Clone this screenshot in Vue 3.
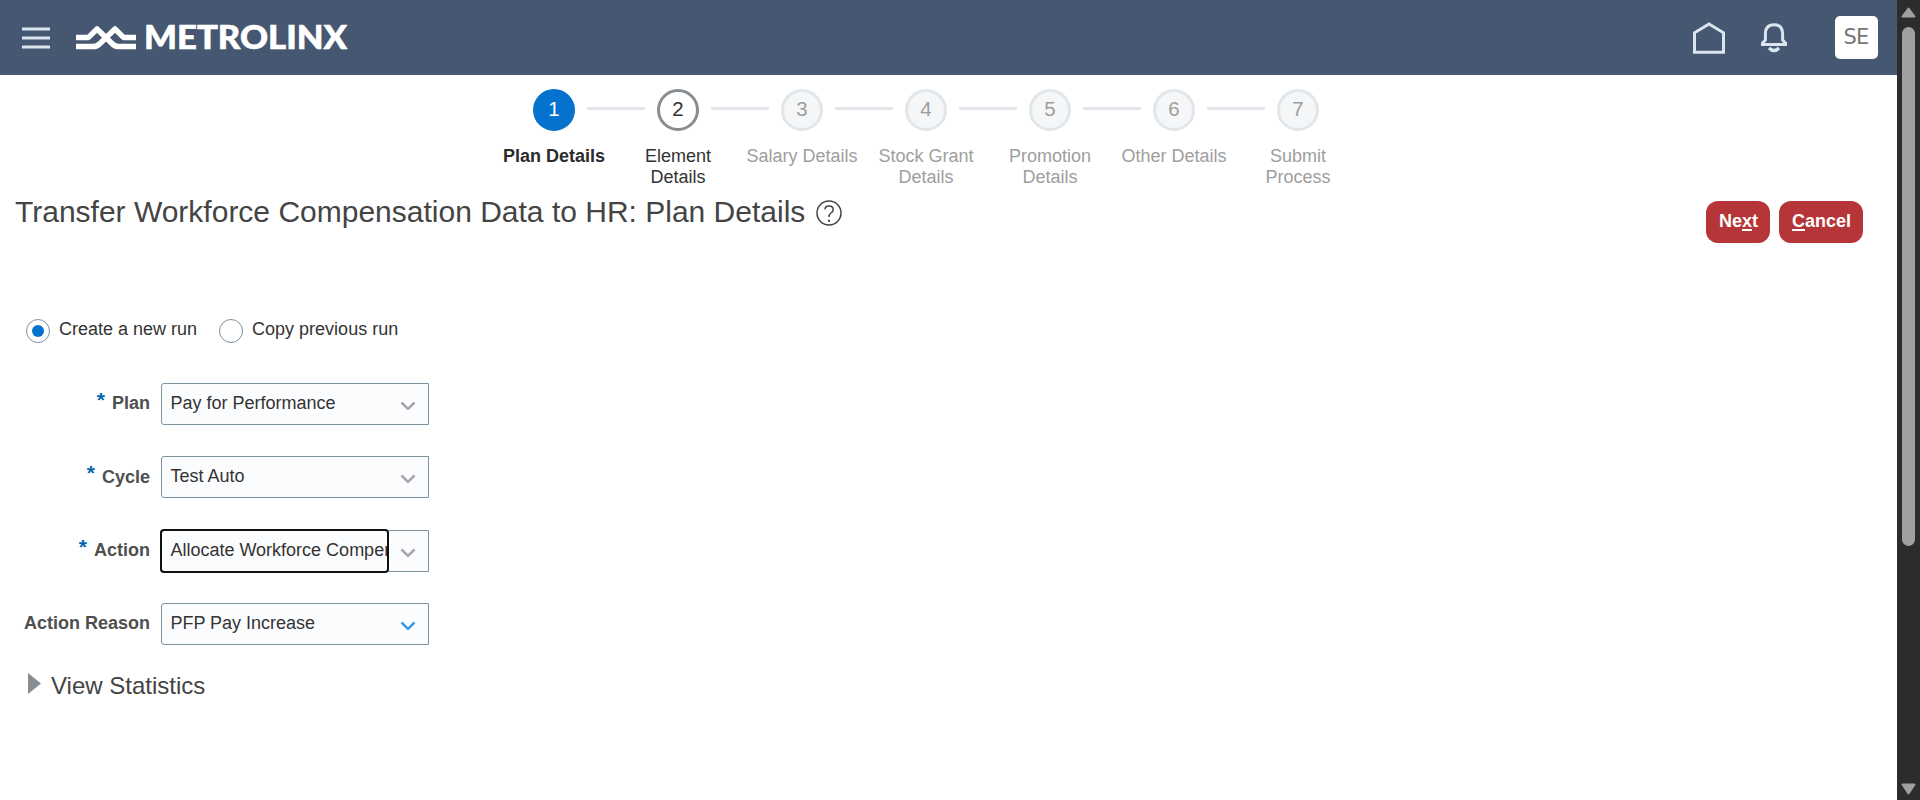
<script setup>
import { ref } from 'vue'

const steps = [
  { n: 1, label: 'Plan Details', state: 'current' },
  { n: 2, label: 'Element Details', state: 'next' },
  { n: 3, label: 'Salary Details', state: 'off' },
  { n: 4, label: 'Stock Grant Details', state: 'off' },
  { n: 5, label: 'Promotion Details', state: 'off' },
  { n: 6, label: 'Other Details', state: 'off' },
  { n: 7, label: 'Submit Process', state: 'off' },
]

const fields = [
  { label: 'Plan', value: 'Pay for Performance', required: true },
  { label: 'Cycle', value: 'Test Auto', required: true },
  { label: 'Action', value: 'Allocate Workforce Compen', required: true, focused: true },
  { label: 'Action Reason', value: 'PFP Pay Increase', active: true },
]

const runs = ['Create a new run', 'Copy previous run']
const run = ref(0)
</script>

<template>
  <div class="window">
    <div class="page">
      <header class="topbar">
        <svg class="menu" width="28" height="23" viewBox="0 0 28 23">
          <path d="M0 2h28M0 11h28M0 20h28" stroke="#dbe5f0" stroke-width="3" />
        </svg>
        <svg class="logo" width="290" height="36" viewBox="0 0 290 36">
          <g fill="none" stroke="#fff" stroke-width="5.5" stroke-linejoin="round">
            <path d="M1 15.4H13.5L22 7L37 21.5Q40 24.6 43.5 24.6H61" />
            <path d="M1 24.6H18Q22 24.6 25 21.5L40 7L48.5 15.4H61" />
          </g>
          <text x="69" y="27.2" textLength="203" lengthAdjust="spacingAndGlyphs">METROLINX</text>
        </svg>
        <div class="tools">
          <svg class="home" width="32" height="32" viewBox="0 0 32 32">
            <path d="M1.5 30.2V10.8L16 1.9L30.5 10.8V30.2Z" fill="none" stroke="#dbe5f0" stroke-width="3" />
          </svg>
          <svg class="bell" width="26" height="30" viewBox="0 0 26 30">
            <path d="M1.4 21.4V20.2L4.4 17V11Q4.4 1.8 13 1.8T21.6 11V17L24.6 20.2V21.4Z" fill="none" stroke="#dbe5f0" stroke-width="3" />
            <path d="M8 25Q13 30 18 25" fill="none" stroke="#dbe5f0" stroke-width="3.4" />
          </svg>
          <div class="avatar">SE</div>
        </div>
      </header>

      <nav class="train">
        <div v-for="s in steps" :key="s.n" class="step" :class="s.state">
          <div class="dot">{{ s.n }}</div>
          <div class="name">{{ s.label }}</div>
        </div>
      </nav>

      <div class="heading">
        <h1>Transfer Workforce Compensation Data to HR: Plan Details</h1>
        <svg class="help" width="26" height="26" viewBox="0 0 26 26" fill="none" stroke="#444" stroke-width="1.5">
          <circle cx="13" cy="13" r="12" />
          <path d="M9 9.5Q9 6 13 6T17.2 9.5Q17.2 11.5 15 13T13 17" />
          <path d="M13 19.7V21.7" stroke-width="2" />
        </svg>
        <div class="actions">
          <button class="next">Ne<u>x</u>t</button>
          <button class="cancel"><u>C</u>ancel</button>
        </div>
      </div>

      <div class="radios">
        <div v-for="(r, i) in runs" :key="r" class="radio" :class="{ on: run === i }" @click="run = i">
          <span class="ring"></span><span class="rtext">{{ r }}</span>
        </div>
      </div>

      <div class="form">
        <div v-for="f in fields" :key="f.label" class="row">
          <div class="label"><span v-if="f.required" class="star">*</span>{{ f.label }}</div>
          <div class="field" :class="{ focused: f.focused, active: f.active }">
            <div class="value"><span>{{ f.value }}</span></div>
            <svg class="chev" width="16" height="10" viewBox="0 0 16 10">
              <path d="M1.5 1.5L8 7.8L14.5 1.5" fill="none" stroke="currentColor" stroke-width="2.5" />
            </svg>
          </div>
        </div>
      </div>

      <div class="stats">
        <svg width="13" height="21" viewBox="0 0 13 21"><path d="M0 0L13 10.5L0 21Z" fill="#878d91" /></svg>
        <span>View Statistics</span>
      </div>
    </div>

    <aside class="scroll">
      <svg width="15" height="11" viewBox="0 0 15 11"><path d="M7.5 1.5L13.5 9.5H1.5Z" fill="#a0a0a0" stroke="#a0a0a0" stroke-width="2" stroke-linejoin="round" /></svg>
      <div class="thumb"></div>
      <svg class="down" width="15" height="12" viewBox="0 0 15 12"><path d="M7.5 10.5L13.5 1.5H1.5Z" fill="#a0a0a0" stroke="#a0a0a0" stroke-width="2" stroke-linejoin="round" /></svg>
    </aside>
  </div>
</template>

<style>
body { margin: 0; overflow: hidden; }
</style>

<style scoped>
*, *::before, *::after { box-sizing: border-box; }
.window { display: flex; width: 1920px; height: 800px; background: #fff; color: #333; font: 18px/21px "Liberation Sans", Arial, sans-serif; }
.page { width: 1897px; display: flex; flex-direction: column; }
.topbar { height: 75px; flex: none; background: #465771; display: flex; align-items: flex-start; padding: 0 19px 0 22px; }
.menu { margin-top: 27px; }
.logo { margin: 22px 0 0 25px; overflow: visible; }
.logo text { font: 900 33px Lato, sans-serif; fill: #fff; stroke: #fff; stroke-width: 0.6px; }
.tools { margin-left: auto; display: flex; }
.home { margin-top: 22px; }
.bell { margin: 23px 0 0 36px; }
.avatar { width: 43px; height: 43px; margin: 16px 0 0 48px; border-radius: 5px; background: #fff; color: #777; font: 21px/43px "DejaVu Sans", sans-serif; letter-spacing: -0.8px; text-align: center; padding-right: 1px; }

.train { display: flex; margin: 14px 0 0 492px; height: 100px; flex: none; }
.step { width: 124px; display: flex; flex-direction: column; align-items: center; position: relative; text-align: center; color: #9e9e9e; }
.step + .step::before { content: ""; position: absolute; left: -29px; top: 18px; width: 58px; height: 3px; background: #e3e7eb; }
.dot { width: 42px; height: 42px; border-radius: 50%; border: 3px solid #e1e6eb; background: #f4f6f8; font-size: 20.5px; line-height: 34px; }
.name { margin-top: 15px; white-space: nowrap; }
.step:nth-child(2) .name, .step:nth-child(4) .name, .step:nth-child(5) .name, .step:nth-child(7) .name { white-space: normal; width: 106px; }
.step:nth-child(2) .name, .step:nth-child(7) .name { width: 90px; }
.current { color: #2b2b2b; font-weight: 700; }
.current .dot { background: #0572ce; border-color: #0572ce; color: #fff; font-weight: 400; }
.next.step { color: #333; }
.next .dot { background: #fff; border-color: #878d91; }

.heading { display: flex; height: 60px; padding-left: 15px; align-items: flex-start; flex: none; }
h1 { margin: 5px 0 0; font-weight: 400; font-size: 30px; line-height: 36px; color: #444; white-space: nowrap; }
.help { margin: 11px 0 0 11px; }
.actions { margin: 12px 34px 0 auto; display: flex; gap: 9px; }
button { height: 42px; border: 0; border-radius: 12px; background: #b53538; color: #fff; font: 700 18px/21px "Liberation Sans", Arial, sans-serif; padding: 0 0 2px 1px; }
button u { text-underline-offset: 2px; text-decoration-thickness: 1.5px; }
button.next { width: 64px; }
button.cancel { width: 84px; }

.radios { display: flex; margin: 70px 0 0 26px; height: 24px; gap: 22px; }
.radio { display: flex; gap: 9px; }
.ring { width: 24px; height: 24px; border: 1px solid #7e909e; border-radius: 50%; display: grid; place-items: center; }
.on .ring::after { content: ""; width: 12px; height: 12px; border-radius: 50%; background: #0572ce; }
.rtext { margin-top: 0; white-space: nowrap; }

.form { display: flex; flex-direction: column; margin-top: 40px; gap: 31.33px; }
.row { display: flex; gap: 11px; height: 42px; }
.label { width: 150px; display: flex; justify-content: flex-end; font-weight: 700; color: #4f4f4f; padding-top: 10.4px; white-space: nowrap; }
.star { color: #0066b0; font-size: 21px; margin: -4.5px 7px 0 0; }
.field { width: 268px; height: 42px; border: 1px solid #7e929e; border-radius: 3px 0 0 3px; background: #fbfcfe; display: flex; position: relative; color: #a3a5a9; }
.value { width: 226px; padding: 9px 0 0 8.4px; overflow: hidden; white-space: nowrap; color: #333; }
.chev { margin: 17px 0 0 12px; }
.active { color: #3d96e2; }
.focused::after { content: ""; position: absolute; left: -2px; top: -2px; width: 229px; height: 44px; border: 2px solid #101010; border-radius: 4px; }

.stats { display: flex; margin: 28px 0 0 28px; align-items: flex-start; font-size: 24px; line-height: 28px; color: #444; }
.stats span { margin: -1px 0 0 10px; }

.scroll { width: 23px; height: 800px; background: #2c2c2c; display: flex; flex-direction: column; align-items: center; padding: 7px 0 5px; }
.thumb { width: 13px; height: 519px; margin-top: 9px; border-radius: 7px; background: #a0a0a0; }
.down { margin-top: auto; }
</style>
